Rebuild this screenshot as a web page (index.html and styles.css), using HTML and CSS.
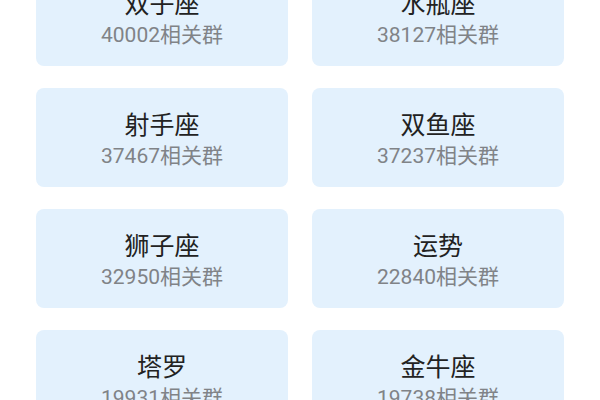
FILE: index.html
```html
<!DOCTYPE html>
<html lang="zh">
<head>
<meta charset="utf-8">
<link rel="stylesheet" href="styles.css">
</head>
<body>
<div class="grid">
  <div class="card"><div class="title">双子座</div><div class="count">40002相关群</div></div>
  <div class="card"><div class="title">水瓶座</div><div class="count">38127相关群</div></div>
  <div class="card"><div class="title">射手座</div><div class="count">37467相关群</div></div>
  <div class="card"><div class="title">双鱼座</div><div class="count">37237相关群</div></div>
  <div class="card"><div class="title">狮子座</div><div class="count">32950相关群</div></div>
  <div class="card"><div class="title">运势</div><div class="count">22840相关群</div></div>
  <div class="card"><div class="title">塔罗</div><div class="count">19931相关群</div></div>
  <div class="card"><div class="title">金牛座</div><div class="count">19738相关群</div></div>
</div>
</body>
</html>
```
FILE: styles.css
```css
html, body {
  margin: 0;
  padding: 0;
  background: #ffffff;
  overflow: hidden;
}
body {
  font-family: Roboto, "Noto Sans CJK SC", sans-serif;
}
.grid {
  display: grid;
  grid-template-columns: 252px 252px;
  column-gap: 24px;
  row-gap: 22px;
  padding-left: 36px;
  margin-top: -33px;
}
.card {
  height: 99px;
  box-sizing: border-box;
  border-radius: 8px;
  background: #e3f1fd;
  display: flex;
  flex-direction: column;
  align-items: center;
  padding-top: 23px;
}
.title {
  font-size: 25px;
  line-height: 30px;
  color: #222222;
}
.count {
  font-size: 21px;
  line-height: 30px;
  color: #808387;
}
```
